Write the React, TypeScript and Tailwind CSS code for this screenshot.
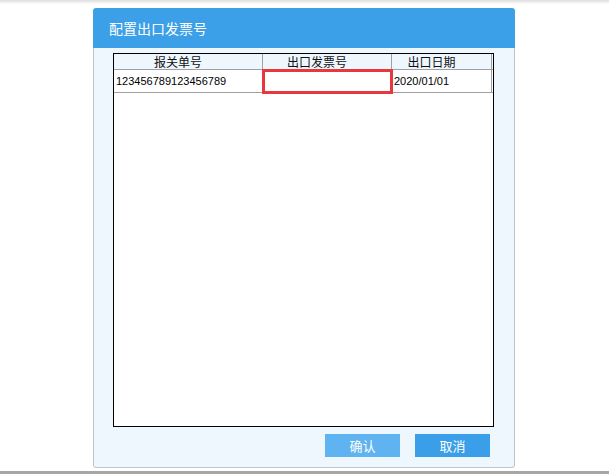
const cjk = '"Noto Sans CJK SC", "Noto Sans", sans-serif'
const num = '"Liberation Sans", Arial, sans-serif'

const columns = [
  { title: '报关单号', width: 'w-[149px]' },
  { title: '出口发票号', width: 'w-[129px]' },
  { title: '出口日期', width: 'w-[100px]' },
]

export default function App() {
  return (
    <div className="w-[609px] h-[474px] bg-white flex flex-col overflow-hidden" style={{ fontFamily: cjk }}>
      <div className="h-[4px] shrink-0 bg-gradient-to-b from-[#dcdcdc] to-white" />

      {/* Dialog */}
      <div className="mt-[4px] ml-[93px] w-[422px] h-[460px] shrink-0 flex flex-col rounded-[3px] overflow-hidden">
        <div className="h-[40px] shrink-0 bg-[#3ca0e8] text-white text-[14px] pl-[16px] flex items-center">
          配置出口发票号
        </div>

        <div className="flex-1 flex flex-col bg-[#eef7fe] border-x border-b border-[#bcc4cc] rounded-b-[3px]">
          <div className="mt-[5px] ml-[19px] w-[381px] h-[374px] border border-black bg-white">
            {/* header row */}
            <div className="flex h-[16px] bg-[#eef7fe] border-b border-[#a0a0a0]">
              {columns.map((c) => (
                <div
                  key={c.title}
                  className={`${c.width} h-full border-r border-[#a0a0a0] text-[12px] leading-[15px] text-[#111] text-center pr-[20px]`}
                >
                  {c.title}
                </div>
              ))}
            </div>

            {/* data row */}
            <div className="flex h-[23px] border-b border-[#a0a0a0] text-[11px] text-black" style={{ fontFamily: num }}>
              <div className="w-[149px] border-r border-[#a0a0a0] pl-[2px] flex items-center">
                123456789123456789
              </div>
              <div className="w-[129px] border-r border-[#a0a0a0] relative">
                <div className="absolute -left-[1px] -top-[1px] -right-[2px] -bottom-[2px] border-[3px] border-[#e8383d]" />
              </div>
              <div className="w-[100px] border-r border-[#a0a0a0] pl-[2px] flex items-center">
                2020/01/01
              </div>
            </div>
          </div>

          <div className="mt-[7px] pr-[24px] flex justify-end gap-[15px]">
            <button type="button" className="w-[75px] h-[23px] bg-[#5fb3f0] text-white text-[13px] flex items-center justify-center">
              确认
            </button>
            <button type="button" className="w-[75px] h-[23px] bg-[#3a9ee8] text-white text-[13px] flex items-center justify-center">
              取消
            </button>
          </div>
        </div>
      </div>

      <div className="mt-[3px] h-[3px] shrink-0 bg-[#a6a6a6]" />
    </div>
  )
}
